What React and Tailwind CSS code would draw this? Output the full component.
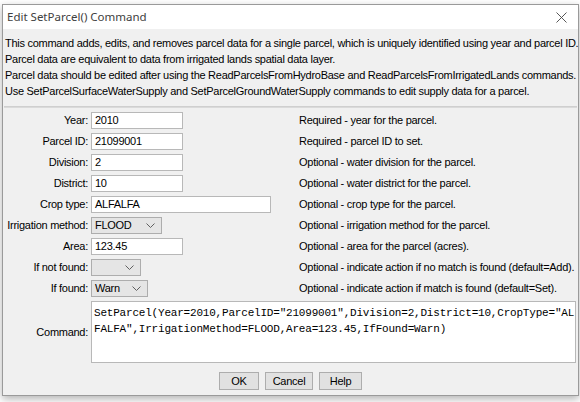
const ROWS = [
    { label: 'Year:', value: '2010', width: 'w-[92px]', desc: 'Required - year for the parcel.' },
    { label: 'Parcel ID:', value: '21099001', width: 'w-[92px]', desc: 'Required - parcel ID to set.' },
    { label: 'Division:', value: '2', width: 'w-[92px]', desc: 'Optional - water division for the parcel.' },
    { label: 'District:', value: '10', width: 'w-[92px]', desc: 'Optional - water district for the parcel.' },
    { label: 'Crop type:', value: 'ALFALFA', width: 'w-[180px]', desc: 'Optional - crop type for the parcel.' },
    { label: 'Irrigation method:', value: 'FLOOD', select: true, width: 'w-[71px]', desc: 'Optional - irrigation method for the parcel.' },
    { label: 'Area:', value: '123.45', width: 'w-[92px]', desc: 'Optional - area for the parcel (acres).' },
    { label: 'If not found:', value: '', select: true, width: 'w-[50px]', desc: 'Optional - indicate action if no match is found (default=Add).' },
    { label: 'If found:', value: 'Warn', select: true, width: 'w-[57px]', desc: 'Optional - indicate action if match is found (default=Set).' },
];

const INTRO = [
    'This command adds, edits, and removes parcel data for a single parcel, which is uniquely identified using year and parcel ID.',
    'Parcel data are equivalent to data from irrigated lands spatial data layer.',
    'Parcel data should be edited after using the ReadParcelsFromHydroBase and ReadParcelsFromIrrigatedLands commands.',
    'Use SetParcelSurfaceWaterSupply and SetParcelGroundWaterSupply commands to edit supply data for a parcel.',
];

// the command text as the text area wraps it
const COMMAND_LINES = [
    'SetParcel(Year=2010,ParcelID="21099001",Division=2,District=10,CropType="AL',
    'FALFA",IrrigationMethod=FLOOD,Area=123.45,IfFound=Warn)',
];

function Chevron() {
    return (
        <svg width="9" height="5" viewBox="0 0 9 5" className="shrink-0">
            <path d="M0.5 0.5 L4.5 4.5 L8.5 0.5" fill="none" stroke="#606060" strokeWidth="1" />
        </svg>
    );
}

function Field({ row }) {
    if (row.select) {
        return (
            <div className={`flex h-[17px] items-center justify-between border border-[#adadad] bg-[#e5e5e5] pl-[3px] pr-[6px] ${row.width}`}>
                <span>{row.value}</span>
                <Chevron />
            </div>
        );
    }
    return (
        <div className={`flex h-[17px] items-center border border-[#b8b8b8] bg-white pl-[3px] ${row.width}`}>
            {row.value}
        </div>
    );
}

function Button({ children, width }) {
    return (
        <div className={`flex h-[18px] items-center justify-center border border-[#adadad] bg-[#e1e1e1] ${width}`}>
            {children}
        </div>
    );
}

export default function App() {
    return (
        <div
            className="h-[402px] w-[580px] overflow-hidden bg-white pl-[2px] pt-[4px] text-[11px] tracking-[-0.27px] text-black"
            style={{ fontFamily: '"Liberation Sans", Arial, sans-serif' }}
        >
            <div className="flex h-[392px] w-[577px] flex-col border border-[#9a9a9a] bg-[#f0f0f0] shadow-[0_3px_8px_rgba(0,0,0,0.3)]">
                <div className="flex h-[24px] shrink-0 items-center justify-between bg-white pl-[4px] pr-[11px]">
                    <span className="text-[11.5px] tracking-normal text-[#404040]" style={{ fontFamily: '"Noto Sans", sans-serif' }}>
                        Edit SetParcel() Command
                    </span>
                    <svg width="11" height="11" viewBox="0 0 11 11">
                        <path d="M0.5 0.5 L10.5 10.5 M10.5 0.5 L0.5 10.5" stroke="#444" strokeWidth="0.9" />
                    </svg>
                </div>

                <div className="px-[2px] pt-[6px] leading-[16px]">
                    {INTRO.map((line) => (
                        <div key={line} className="whitespace-nowrap">{line}</div>
                    ))}
                </div>

                <div className="mx-[1px] mt-[7px] h-[2px] border-t border-[#cfcfcf] border-b-white bg-[#dadada]" />

                <div className="mt-[4px] flex flex-col gap-[4px]">
                    {ROWS.map((row) => (
                        <div key={row.label} className="flex h-[17px] items-center">
                            <div className="w-[85px] shrink-0 whitespace-nowrap text-right">{row.label}</div>
                            <div className="ml-[3px] w-[208px] shrink-0">
                                <Field row={row} />
                            </div>
                            <div className="whitespace-nowrap">{row.desc}</div>
                        </div>
                    ))}
                </div>

                <div className="mt-[4px] flex items-center">
                    <div className="w-[85px] shrink-0 text-right">Command:</div>
                    <div
                        className="ml-[3px] h-[62px] w-[485px] shrink-0 overflow-hidden border border-[#b8b8b8] bg-white px-[2px] pt-[3px] text-[11px] leading-[16px] tracking-[-0.2px]"
                        style={{ fontFamily: '"Liberation Mono", "Courier New", monospace' }}
                    >
                        {COMMAND_LINES.map((line) => (
                            <div key={line} className="whitespace-nowrap">{line}</div>
                        ))}
                    </div>
                </div>

                <div className="mt-[9px] flex justify-center gap-[6px]">
                    <Button width="w-[40px]">OK</Button>
                    <Button width="w-[48px]">Cancel</Button>
                    <Button width="w-[43px]">Help</Button>
                </div>
            </div>
        </div>
    );
}
